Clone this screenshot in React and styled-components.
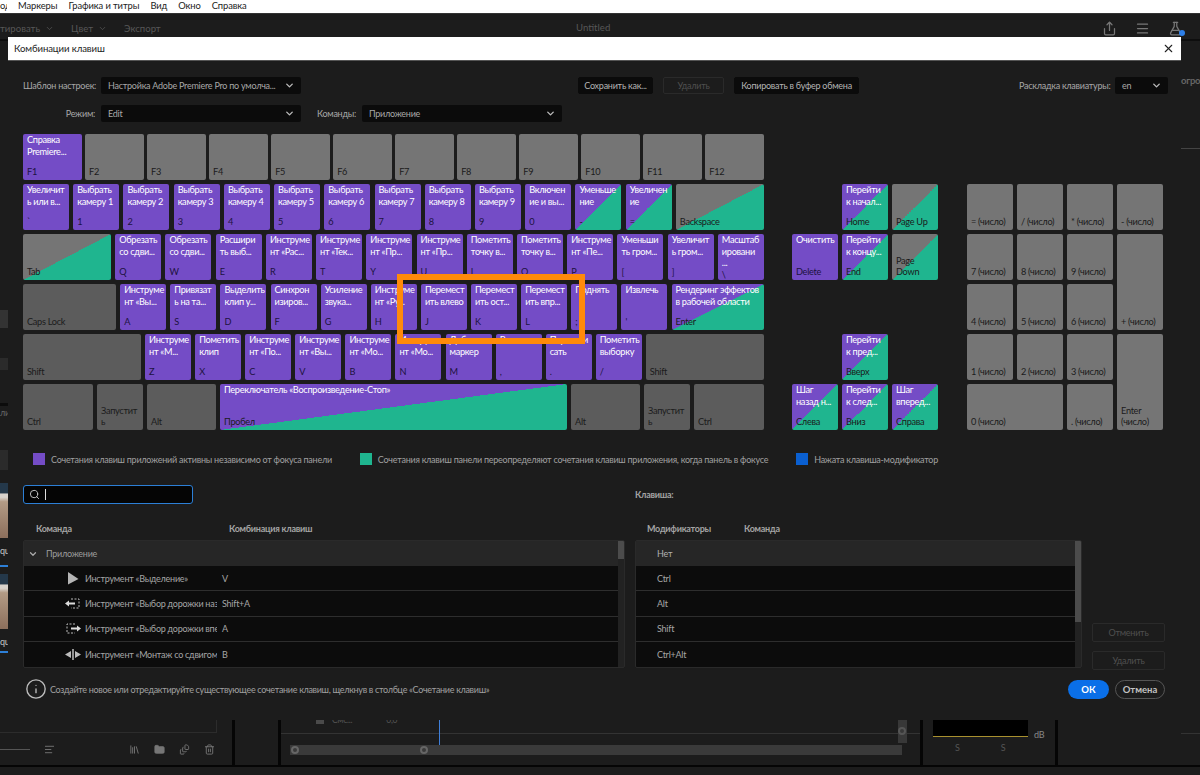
import React from 'react'
import styled, { createGlobalStyle, css } from 'styled-components'
import { ChevronDown, X, Search, Info, AlignLeft, Library, Folder, FileStack, Trash2, Share, Menu, FlaskConical } from 'lucide-react'

const PURPLE = '#744cc6'
const GREEN = '#1fb58f'
const GRAY = '#757575'
const DARKGRAY = '#5c5c5c'
const FONT = 'Lato, Roboto, "Noto Sans", sans-serif'

const GlobalStyle = createGlobalStyle`
html, body { margin: 0; padding: 0; background: #1c1c1c; }
*, *::before, *::after { box-sizing: border-box; }
body { font-family: ${FONT}; font-size: 9px; letter-spacing: -0.25px; }
`

const Page = styled.div`
position: relative;
width: 1200px;
height: 775px;
overflow: hidden;
background: #1c1c1c;
display: flex;
flex-direction: column;
`

const MenuBar = styled.div`
height: 14px;
background: #fff;
border-bottom: 1px solid #333;
display: flex;
gap: 11px;
font-size: 9.4px;
line-height: 11px;
letter-spacing: -0.1px;
color: #222;
`
const MenuCut = styled.span`
width: 7px;
overflow: hidden;
`

const TopBar = styled.div`
height: 27px;
background: #1c1c1c;
border-bottom: 2px solid #0e0e0e;
display: flex;
align-items: center;
padding-top: 3px;
font-size: 9.6px;
letter-spacing: 0;
color: #575757;
`
const TopTab = styled.span`
display: flex;
align-items: center;
gap: 5px;
margin-right: 17px;
svg { width: 9px; height: 9px; }
`
const TopTitle = styled.span`
position: absolute;
left: 576px;
top: 22px;
`
const TopIcons = styled.div`
margin-left: auto;
display: flex;
align-items: center;
gap: 18px;
padding-right: 17px;
color: #777;
svg { width: 15px; height: 15px; }
`
const FlaskWrap = styled.span`
position: relative;
display: flex;
&::after {
  content: '';
  position: absolute;
  right: -2px;
  bottom: 0;
  width: 6px;
  height: 6px;
  border-radius: 50%;
  background: #2d7fe8;
}
`

const Workspace = styled.div`
flex: 1;
display: flex;
gap: 3px;
padding-bottom: 2px;
margin-bottom: 8px;
background: #050505;
`
const Panel = styled.div`
position: relative;
width: ${p => p.$w}px;
background: #1c1c1c;
display: flex;
flex-direction: column;
justify-content: flex-end;
color: #555;
`
const LeftStrip = styled.div`
position: absolute;
top: 0;
left: 0;
width: 8px;
display: flex;
flex-direction: column;
overflow: hidden;
`
const StripBlock = styled.div`
height: ${p => p.$h}px;
margin-top: ${p => p.$top}px;
background: ${p => p.$bg};
`
const StripPhoto = styled.div`
height: 55px;
margin-top: ${p => p.$top}px;
background: linear-gradient(#24384a 0 18%, #d8d2cc 20% 26%, #b39b85 34%, #8c6f5c 100%);
`
const StripText = styled.div`
height: 13px;
margin-top: ${p => p.$top || 0}px;
line-height: 13px;
font-size: 9px;
color: ${p => p.$c || '#c8c8c8'};
white-space: nowrap;
`
const BinFrame = styled.div`
height: 20px;
margin-right: 15px;
border-right: 1px solid #2c2c2c;
border-bottom: 1px solid #2c2c2c;
`
const BinTools = styled.div`
height: 32px;
display: flex;
align-items: center;
color: #767676;
svg { width: 11px; height: 11px; }
`
const ZoomLine = styled.div`
width: 30px;
height: 1px;
background: #555;
margin-right: 14px;
`
const BinIcons = styled.div`
display: flex;
gap: 14px;
margin-left: 74px;
`
const TimelineRow = styled.div`
height: 21px;
border-bottom: 1px solid #333;
display: flex;
gap: 8px;
padding: 2px 0 0 35px;
font-size: 8.5px;
color: #555;
`
const ClipGlyph = styled.span`
width: 8px;
height: 7px;
margin-top: 2px;
background: #4a4a4a;
`
const ClipValue = styled.span`
margin-left: 26px;
`
const TimelineBottom = styled.div`
height: 31px;
padding: 11px 18px 0 9px;
`
const Track = styled.div`
position: relative;
height: 10px;
background: #3a3a3a;
`
const TrackHandle = styled.span`
position: absolute;
left: ${p => p.$x}px;
top: 1px;
width: 8px;
height: 8px;
border-radius: 50%;
border: 2px solid #666;
`
const SideHandle = styled.div`
position: absolute;
right: 13px;
bottom: 22px;
width: 9px;
height: 24px;
background: #383838;
&::after {
  content: '';
  position: absolute;
  left: 0;
  top: 8px;
  width: 8px;
  height: 8px;
  border-radius: 50%;
  border: 2px solid #555;
}
`
const Playhead = styled.div`
position: absolute;
left: 158px;
bottom: 20px;
width: 1px;
height: 26px;
background: #3f7fd9;
`
const MeterBox = styled.div`
width: 95px;
height: 18px;
margin-left: 10px;
background: #000;
border-bottom: 1px solid #a9912f;
`
const MeterFoot = styled.div`
height: 28px;
display: flex;
gap: 41px;
padding: 5px 0 0 32px;
font-size: 9px;
color: #555;
`
const MeterDb = styled.span`
position: absolute;
left: 111px;
bottom: 25px;
font-size: 9px;
color: #888;
`
const SideCut = styled.div`
position: absolute;
top: 34px;
right: 0;
width: 19px;
font-weight: 700;
font-size: 9.5px;
color: #666;
white-space: nowrap;
overflow: hidden;
`
const SideRule = styled.div`
height: 1px;
background: ${p => p.$c};
margin-left: 123px;
position: absolute;
left: 0;
right: 0;
top: ${p => p.$top}px;
`

/* dialog */
const Dialog = styled.div`
position: absolute;
left: 8px;
top: 37px;
width: 1173px;
height: 683px;
background: #1c1c1c;
color: #b4b4b4;
`
const TitleBar = styled.div`
height: 24px;
background: #fff;
border-bottom: 1px solid #555;
color: #1c1c1c;
font-size: 9.6px;
letter-spacing: -0.1px;
display: flex;
align-items: center;
justify-content: space-between;
padding: 0 6px 0 6px;
svg { width: 13px; height: 13px; color: #222; }
`
const Body = styled.div`
padding: 16px 13px 0 15px;
`
const FormRow = styled.div`
display: flex;
align-items: center;
height: 17px;
margin-bottom: 11px;
`
const FormLabel = styled.label`
width: ${p => p.$w}px;
margin-left: ${p => p.$ml || 0}px;
text-align: right;
white-space: nowrap;
color: #a8a8a8;
margin-right: 6px;
`
const SelectBox = styled.div`
width: ${p => p.$w}px;
height: 17px;
background: #0b0b0b;
border-radius: 2px;
color: #a8a8a8;
display: flex;
align-items: center;
justify-content: space-between;
padding: 0 6px 0 7px;
white-space: nowrap;
svg { width: 11px; height: 11px; color: #bbb; flex: none; stroke-width: 3; }
`
const DlgButton = styled.button`
width: ${p => p.$w}px;
height: ${p => p.$h || 17}px;
margin-left: ${p => p.$ml || 0}px;
padding: 0;
font: inherit;
letter-spacing: inherit;
white-space: nowrap;
border-radius: 2px;
border: 1px solid ${p => p.$off ? '#2a2a2a' : '#0b0b0b'};
background: ${p => p.$off ? 'transparent' : '#0b0b0b'};
color: ${p => p.$off ? '#4f4f4f' : '#b4b4b4'};
`

/* keyboard */
const Keyboard = styled.div`
display: flex;
margin-top: 12px;
`
const KeysMain = styled.div`
position: relative;
width: 741px;
display: flex;
flex-direction: column;
gap: 4px;
`
const KeyRow = styled.div`
display: flex;
justify-content: space-between;
`
const tones = {
  purple: css`background: ${PURPLE};`,
  gray: css`background: ${GRAY};`,
  dark: css`background: ${DARKGRAY};`,
  purpleSplit: css`background: linear-gradient(to bottom right, ${PURPLE} 50%, ${GREEN} 50%);`,
  graySplit: css`background: linear-gradient(to bottom right, ${GRAY} 50%, ${GREEN} 50%);`,
}
const KeyCap = styled.div`
width: ${p => p.$w ? `${p.$w}px` : 'auto'};
height: ${p => p.$h ? `${p.$h}px` : '46px'};
${p => p.$span && `grid-column: span ${p.$span};`}
${p => p.$rows && `grid-row: span ${p.$rows};`}
${p => tones[p.$tone]}
border-radius: 2px;
padding: 0 2px 2px 4px;
display: flex;
flex-direction: column;
justify-content: space-between;
line-height: 11.7px;
font-size: 9.2px;
letter-spacing: -0.3px;
overflow: hidden;
white-space: pre;
`
const KeyAction = styled.div`
color: #fff;
`
const KeyName = styled.div`
color: ${p => p.$tone === 'purple' ? '#1d1240' : '#1b1b1b'};
`
const OrangeFrame = styled.div`
position: absolute;
left: 374px;
top: 140px;
width: 188px;
height: 70px;
border: 6px solid #ff8a0a;
`
const SideKeys = styled.div`
display: grid;
grid-template-columns: repeat(${p => p.$cols}, 46px);
grid-auto-rows: 46px;
gap: 4px;
margin: 50px 0 0 ${p => p.$ml}px;
align-self: flex-start;
`

/* legend */
const Legend = styled.div`
display: flex;
gap: 28px;
margin: 23px 0 0 10px;
color: #a0a0a0;
`
const LegendItem = styled.div`
display: flex;
align-items: center;
gap: 6px;
height: 12px;
white-space: nowrap;
`
const Swatch = styled.span`
width: 12px;
height: 12px;
background: ${p => p.$c};
`

/* list area */
const SearchRow = styled.div`
display: flex;
align-items: center;
margin-top: 20px;
`
const SearchBox = styled.div`
width: 170px;
height: 19px;
background: #050505;
border: 1.5px solid #2c7fd6;
border-radius: 3px;
display: flex;
align-items: center;
gap: 5px;
padding-left: 5px;
svg { width: 11px; height: 11px; color: #ccc; }
`
const Caret = styled.span`
width: 1px;
height: 11px;
background: #ddd;
`
const BoldLabel = styled.span`
font-weight: 700;
color: #a4a4a4;
margin-left: ${p => p.$ml || 0}px;
width: ${p => p.$w ? `${p.$w}px` : 'auto'};
white-space: nowrap;
`
const ColumnHeads = styled.div`
display: flex;
align-items: center;
height: 14px;
margin: 17px 0 5px;
`
const TablesRow = styled.div`
display: flex;
gap: 10px;
height: 130px;
`
const Table = styled.div`
position: relative;
width: ${p => p.$w}px;
height: 128px;
background: #222;
border: 1px solid #2a2a2a;
border-radius: 2px;
padding-right: 6px;
overflow: hidden;
`
const GroupRow = styled.div`
height: 25px;
background: #262626;
display: flex;
align-items: center;
gap: 8px;
padding-left: 4px;
color: #9c9c9c;
svg { width: 10px; height: 10px; color: #aaa; stroke-width: 3; }
`
const TableRow = styled.div`
height: 25.4px;
background: #0c0c0c;
border-bottom: 1px solid #2e2e2e;
display: flex;
align-items: center;
color: #a6a6a6;
&:last-child { border-bottom: 0; }
`
const RowIcon = styled.span`
width: 61px;
padding-left: ${p => p.$pad}px;
display: flex;
svg { display: block; }
`
const RowName = styled.span`
width: 132px;
margin-right: 5px;
overflow: hidden;
white-space: nowrap;
`
const ModName = styled.span`
padding-left: 21px;
color: ${p => p.$first ? '#b0b0b0' : '#a6a6a6'};
`
const ModHead = styled(GroupRow)`
gap: 0;
padding-left: 0;
`
const Thumb = styled.div`
position: absolute;
top: 0;
right: 0;
width: 6px;
height: ${p => p.$h}px;
background: #4c4c4c;
`
const SideButtons = styled.div`
display: flex;
flex-direction: column;
justify-content: flex-end;
gap: 9px;
`
const Footer = styled.div`
display: flex;
align-items: center;
height: 22px;
margin: 8px 3px 0 2px;
svg { width: 22px; height: 22px; color: #bdbdbd; stroke-width: 1.5; }
`
const FooterText = styled.span`
margin-left: 3px;
color: #a0a0a0;
letter-spacing: -0.31px;
`
const PillOk = styled.button`
margin-left: auto;
width: 41px;
height: 19px;
border-radius: 10px;
border: 0;
padding: 0;
background: #0a6fe8;
color: #fff;
font: 700 9.5px ${FONT};
`
const PillCancel = styled.button`
margin-left: 6px;
width: 50px;
height: 19px;
border-radius: 10px;
border: 1.5px solid #555;
padding: 0;
background: transparent;
color: #c2c2c2;
font: 700 9.5px ${FONT};
`

const P = 'purple', S = 'purpleSplit', Y = 'graySplit', G = 'gray', D = 'dark'
const instr = x => `Инструме\nнт «${x}...`

const rowF = Array.from({ length: 12 }, (_, i) => ({
  w: 58.5,
  tone: i === 0 ? P : G,
  a: i === 0 ? 'Справка\nPremiere...' : '',
  k: `F${i + 1}`,
}))
const rowNum = [
  { w: 46, tone: P, a: 'Увеличит\nь или в...', k: '`' },
  ...[1, 2, 3, 4, 5, 6, 7, 8, 9].map(n => ({ w: 46, tone: P, a: `Выбрать\nкамеру ${n}`, k: String(n) })),
  { w: 46, tone: P, a: 'Включен\nие и вы...', k: '0' },
  { w: 46, tone: S, a: 'Уменьше\nние', k: '-' },
  { w: 46, tone: S, a: 'Увеличен\nие', k: '=' },
  { w: 88, tone: Y, a: '', k: 'Backspace' },
]
const k46 = (a, k) => ({ w: 46, tone: P, a, k })
const rowQ = [
  { w: 88, tone: Y, a: '', k: 'Tab' },
  k46('Обрезать\nсо сдви...', 'Q'), k46('Обрезать\nсо сдви...', 'W'), k46('Расшири\nть выб...', 'E'),
  k46(instr('Рас'), 'R'), k46(instr('Тек'), 'T'), k46(instr('Пр'), 'Y'), k46(instr('Пр'), 'U'),
  k46('Пометить\nточку в...', 'I'), k46('Пометить\nточку в...', 'O'), k46(instr('Пе'), 'P'),
  k46('Уменьши\nть гром...', '['), k46('Увеличит\nь гром...', ']'), k46('Масштаб\nировани\n...', '\\'),
]
const rowA = [
  { w: 93, tone: D, a: '', k: 'Caps Lock' },
  k46(instr('Вы'), 'A'), k46('Привязат\nь на та...', 'S'), k46('Выделить\nклип у...', 'D'),
  k46('Синхрон\nизиров...', 'F'), k46('Усиление\nзвука...', 'G'), k46(instr('Ру'), 'H'),
  k46('Перемест\nить влево', 'J'), k46('Перемест\nить ост...', 'K'), k46('Перемест\nить впр...', 'L'),
  k46('Поднять', ';'), k46('Извлечь', "'"),
  { w: 92.5, tone: S, a: 'Рендеринг эффектов\nв рабочей области', k: 'Enter' },
]
const rowZ = [
  { w: 118, tone: D, a: '', k: 'Shift' },
  k46(instr('М'), 'Z'), k46('Пометить\nклип', 'X'), k46(instr('По'), 'C'), k46(instr('Вы'), 'V'),
  k46(instr('Мо'), 'B'), k46(instr('Мо'), 'N'), k46('Добавить\nмаркер', 'M'), k46('Вставить', ','),
  k46('Перезапи\nсать', '.'), k46('Пометить\nвыборку', '/'),
  { w: 118, tone: D, a: '', k: 'Shift' },
]
const rowCtrl = [
  { w: 70, tone: D, a: '', k: 'Ctrl' },
  { w: 46, tone: D, a: '', k: 'Запустит\nь' },
  { w: 69, tone: D, a: '', k: 'Alt' },
  { w: 347, tone: S, a: 'Переключатель «Воспроизведение-Стоп»', k: 'Пробел' },
  { w: 69, tone: D, a: '', k: 'Alt' },
  { w: 46, tone: D, a: '', k: 'Запустит\nь' },
  { w: 70, tone: D, a: '', k: 'Ctrl' },
]
const keyRows = [rowF, rowNum, rowQ, rowA, rowZ, rowCtrl]

const navKeys = [
  { tone: 'none' }, { tone: S, a: 'Перейти\nк начал...', k: 'Home' }, { tone: Y, a: '', k: 'Page Up' },
  { tone: P, a: 'Очистить', k: 'Delete' }, { tone: S, a: 'Перейти\nк концу...', k: 'End' }, { tone: Y, a: '', k: 'Page\nDown' },
  { tone: 'none' }, { tone: 'none' }, { tone: 'none' },
  { tone: 'none' }, { tone: S, a: 'Перейти\nк пред...', k: 'Вверх' }, { tone: 'none' },
  { tone: S, a: 'Шаг\nназад н...', k: 'Слева' }, { tone: S, a: 'Перейти\nк след...', k: 'Вниз' }, { tone: S, a: 'Шаг\nвперед...', k: 'Справа' },
]
const padKeys = [
  { k: '= (число)' }, { k: '/ (число)' }, { k: '* (число)' }, { k: '- (число)' },
  { k: '7 (число)' }, { k: '8 (число)' }, { k: '9 (число)' }, { k: '+ (число)', rows: 2 },
  { k: '4 (число)' }, { k: '5 (число)' }, { k: '6 (число)' },
  { k: '1 (число)' }, { k: '2 (число)' }, { k: '3 (число)' }, { k: 'Enter\n(число)', rows: 2 },
  { k: '0 (число)', span: 2 }, { k: '. (число)' },
]

const Key = ({ w, tone, a, k, span, rows }) => (
  <KeyCap $w={w} $tone={tone} $span={span} $rows={rows} $h={rows ? 96 : 46}>
    <KeyAction>{a}</KeyAction>
    <KeyName $tone={tone}>{k}</KeyName>
  </KeyCap>
)

const ArrowTool = () => (
  <svg width="11" height="13" viewBox="0 0 11 13"><path d="M0 0 L10.5 7 L0 12.5 Z" fill="#b5b5b5" /></svg>
)
const TrackBack = () => (
  <svg width="16" height="11" viewBox="0 0 16 11">
    <path d="M6 1 H14 V10 H6" fill="none" stroke="#bbb" strokeDasharray="2 1.5" />
    <path d="M0 5.5 L4 2.5 V4.5 H10 V6.5 H4 V8.5 Z" fill="#ddd" />
  </svg>
)
const TrackFwd = () => (
  <svg width="16" height="11" viewBox="0 0 16 11">
    <path d="M10 1 H2 V10 H10" fill="none" stroke="#bbb" strokeDasharray="2 1.5" />
    <path d="M16 5.5 L12 2.5 V4.5 H6 V6.5 H12 V8.5 Z" fill="#ddd" />
  </svg>
)
const RippleTool = () => (
  <svg width="16" height="11" viewBox="0 0 16 11">
    <path d="M8 0 V11" stroke="#ccc" strokeWidth="1.4" />
    <path d="M0 5.5 L6 2 V9 Z M16 5.5 L10 2 V9 Z" fill="#bbb" />
  </svg>
)

const commands = [
  { icon: <ArrowTool />, pad: 44, name: 'Инструмент «Выделение»', key: 'V' },
  { icon: <TrackBack />, pad: 41, name: 'Инструмент «Выбор дорожки назад»', key: 'Shift+A' },
  { icon: <TrackFwd />, pad: 41, name: 'Инструмент «Выбор дорожки вперед»', key: 'A' },
  { icon: <RippleTool />, pad: 41, name: 'Инструмент «Монтаж со сдвигом»', key: 'B' },
]
const modifiers = ['Ctrl', 'Alt', 'Shift', 'Ctrl+Alt']

const App = () => (
  <Page>
    <GlobalStyle />
    <MenuBar>
      <MenuCut>од</MenuCut>
      <span>Маркеры</span>
      <span>Графика и титры</span>
      <span>Вид</span>
      <span>Окно</span>
      <span>Справка</span>
    </MenuBar>
    <TopBar>
      <TopTab>тировать <ChevronDown /></TopTab>
      <TopTab>Цвет <ChevronDown /></TopTab>
      <TopTab>Экспорт</TopTab>
      <TopTitle>Untitled</TopTitle>
      <TopIcons>
        <Share />
        <Menu />
        <FlaskWrap><FlaskConical /></FlaskWrap>
      </TopIcons>
    </TopBar>

    <Workspace>
      <Panel $w={232}>
        <LeftStrip>
          <StripBlock $top={269} $h={18} $bg="#333" />
          <StripBlock $top={30} $h={12} $bg="#2b2b2b" />
          <StripBlock $top={33} $h={3} $bg="#0c0c0c" />
          <StripText $c="#666">ли</StripText>
          <StripBlock $top={31} $h={20} $bg="#2b2b2b" />
          <StripPhoto $top={13} />
          <StripText $top={6}>qu</StripText>
          <StripBlock $top={8} $h={2} $bg="#2d7fd6" />
          <StripPhoto $top={7} />
          <StripText $top={6}>qu</StripText>
          <StripBlock $top={3} $h={2} $bg="#2d7fd6" />
        </LeftStrip>
        <BinFrame />
        <BinTools>
          <ZoomLine />
          <AlignLeft />
          <BinIcons>
            <Library />
            <Folder fill="currentColor" />
            <FileStack />
            <Trash2 />
          </BinIcons>
        </BinTools>
      </Panel>
      <Panel $w={43} />
      <Panel $w={639}>
        <Playhead />
        <SideHandle />
        <TimelineRow>
          <ClipGlyph />
          <span>Смс...</span>
          <ClipValue>0,0</ClipValue>
        </TimelineRow>
        <TimelineBottom>
          <Track>
            <TrackHandle $x={1} />
            <TrackHandle $x={130} />
          </Track>
        </TimelineBottom>
      </Panel>
      <Panel $w={132}>
        <MeterBox />
        <MeterDb>dB</MeterDb>
        <MeterFoot><span>S</span><span>S</span></MeterFoot>
      </Panel>
      <Panel $w={142}>
        <SideCut>огров</SideCut>
        <SideRule $top={107} $c="#444" />
        <SideRule $top={692} $c="#333" />
      </Panel>
    </Workspace>

    <Dialog>
      <TitleBar>
        Комбинации клавиш
        <X />
      </TitleBar>
      <Body>
        <FormRow>
          <FormLabel $w={72}>Шаблон настроек:</FormLabel>
          <SelectBox $w={200}>Настройка Adobe Premiere Pro по умолча... <ChevronDown /></SelectBox>
          <DlgButton $w={75} $ml={277}>Сохранить как...</DlgButton>
          <DlgButton $w={61} $ml={10} $off>Удалить</DlgButton>
          <DlgButton $w={125} $ml={10}>Копировать в буфер обмена</DlgButton>
          <FormLabel $w={90} $ml={160}>Раскладка клавиатуры:</FormLabel>
          <SelectBox $w={53}>en <ChevronDown /></SelectBox>
        </FormRow>
        <FormRow>
          <FormLabel $w={72}>Режим:</FormLabel>
          <SelectBox $w={200}>Edit <ChevronDown /></SelectBox>
          <FormLabel $w={39} $ml={16}>Команды:</FormLabel>
          <SelectBox $w={200}>Приложение <ChevronDown /></SelectBox>
        </FormRow>

        <Keyboard>
          <KeysMain>
            {keyRows.map((row, i) => (
              <KeyRow key={i}>
                {row.map((key, j) => <Key key={j} {...key} />)}
              </KeyRow>
            ))}
            <OrangeFrame />
          </KeysMain>
          <SideKeys $cols={3} $ml={28}>
            {navKeys.map((key, i) => key.tone === 'none'
              ? <span key={i} />
              : <Key key={i} {...key} />)}
          </SideKeys>
          <SideKeys $cols={4} $ml={29}>
            {padKeys.map((key, i) => <Key key={i} tone={G} a="" {...key} />)}
          </SideKeys>
        </Keyboard>

        <Legend>
          <LegendItem><Swatch $c={PURPLE} />Сочетания клавиш приложений активны независимо от фокуса панели</LegendItem>
          <LegendItem><Swatch $c={GREEN} />Сочетания клавиш панели переопределяют сочетания клавиш приложения, когда панель в фокусе</LegendItem>
          <LegendItem><Swatch $c="#0a5fd0" />Нажата клавиша-модификатор</LegendItem>
        </Legend>

        <SearchRow>
          <SearchBox><Search /><Caret /></SearchBox>
          <BoldLabel $ml={442}>Клавиша:</BoldLabel>
        </SearchRow>

        <ColumnHeads>
          <BoldLabel $ml={13} $w={193}>Команда</BoldLabel>
          <BoldLabel $w={418}>Комбинация клавиш</BoldLabel>
          <BoldLabel $w={97}>Модификаторы</BoldLabel>
          <BoldLabel>Команда</BoldLabel>
        </ColumnHeads>

        <TablesRow>
          <Table $w={602}>
            <Thumb $h={18} />
            <GroupRow><ChevronDown />Приложение</GroupRow>
            {commands.map(c => (
              <TableRow key={c.key}>
                <RowIcon $pad={c.pad}>{c.icon}</RowIcon>
                <RowName>{c.name}</RowName>
                <span>{c.key}</span>
              </TableRow>
            ))}
          </Table>
          <Table $w={447}>
            <Thumb $h={81} />
            <ModHead><ModName $first>Нет</ModName></ModHead>
            {modifiers.map(m => (
              <TableRow key={m}><ModName>{m}</ModName></TableRow>
            ))}
          </Table>
          <SideButtons>
            <DlgButton $w={73} $h={19} $off>Отменить</DlgButton>
            <DlgButton $w={73} $h={19} $off>Удалить</DlgButton>
          </SideButtons>
        </TablesRow>

        <Footer>
          <Info />
          <FooterText>Создайте новое или отредактируйте существующее сочетание клавиш, щелкнув в столбце «Сочетание клавиш»</FooterText>
          <PillOk>ОК</PillOk>
          <PillCancel>Отмена</PillCancel>
        </Footer>
      </Body>
    </Dialog>
  </Page>
)

export default App
